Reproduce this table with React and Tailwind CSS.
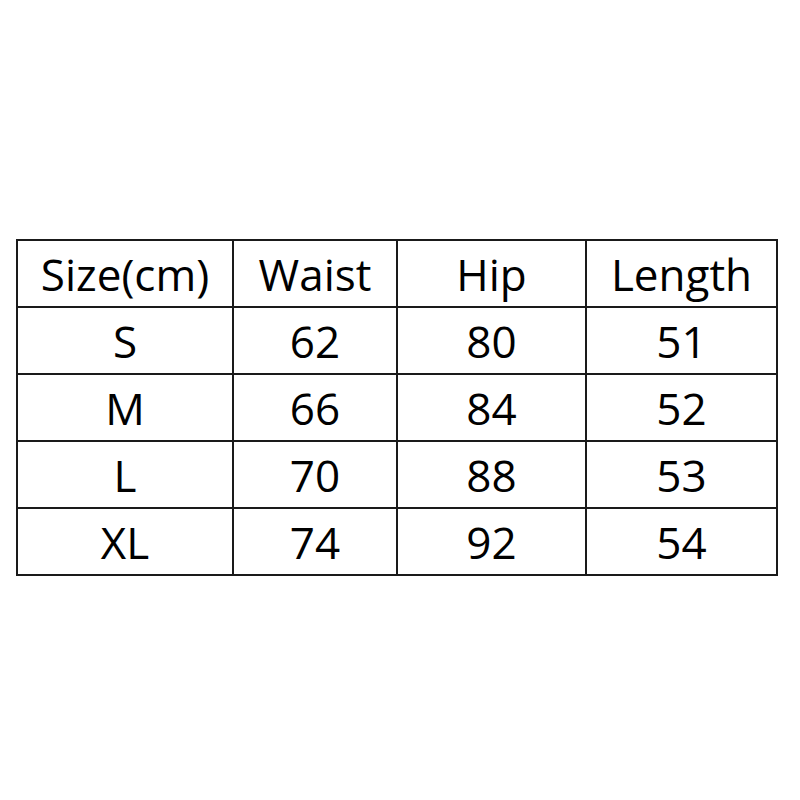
import React from 'react';

export default function App() {
  const header = ['Size(cm)', 'Waist', 'Hip', 'Length'];
  const rows = [
    ['S', '62', '80', '51'],
    ['M', '66', '84', '52'],
    ['L', '70', '88', '53'],
    ['XL', '74', '92', '54'],
  ];
  const widths = ['w-[216px]', 'w-[164px]', 'w-[189px]', 'w-[191px]'];

  return (
    <div className="w-[800px] h-[800px] bg-white pt-[239px] pl-[16px]" style={{ fontFamily: '"Open Sans", sans-serif' }}>
      <table className="border-collapse text-black text-[44px]">
        <tbody>
          {[header, ...rows].map((row, i) => (
            <tr key={i} className="h-[67px]">
              {row.map((cell, j) => (
                <td key={j} className={`${widths[j]} border-2 border-[#1a1a1a] text-center p-0 leading-none`}>
                  {cell}
                </td>
              ))}
            </tr>
          ))}
        </tbody>
      </table>
    </div>
  );
}
